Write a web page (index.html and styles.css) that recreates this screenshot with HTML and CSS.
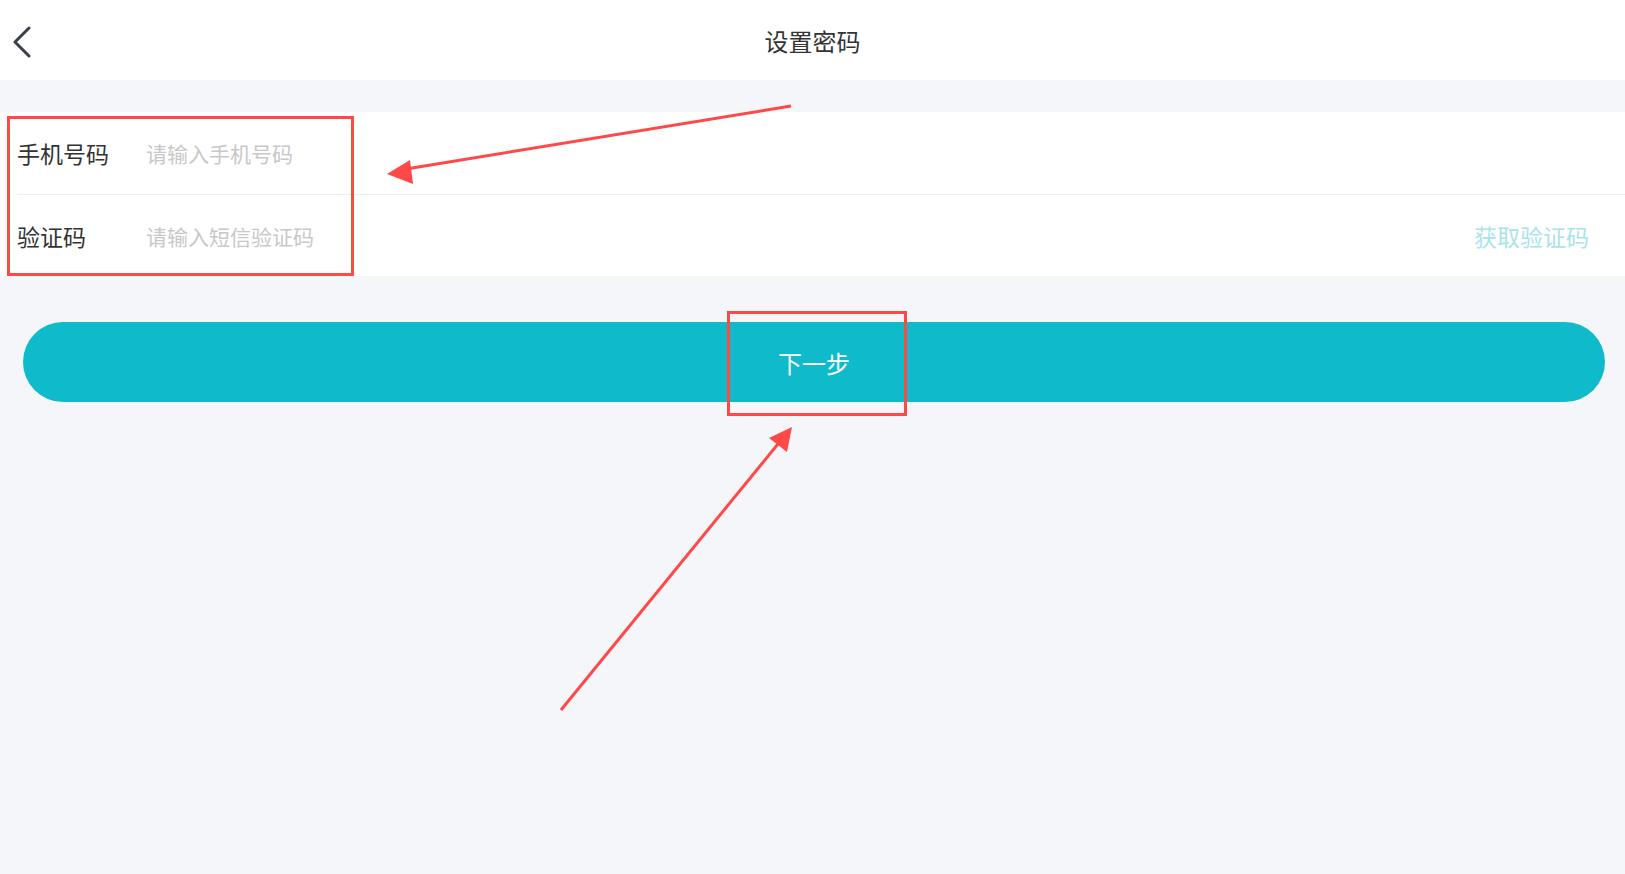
FILE: index.html
```html
<!DOCTYPE html>
<html>

<head>
    <meta charset="utf-8">
    <meta name="viewport" content="width=device-width">
    <title>设置密码</title>
    <link rel="stylesheet" href="styles.css">
</head>

<body>
    <div class="page">
        <div class="nav-bar">
            <span class="nav-back">
                <svg width="20" height="32" viewBox="0 0 20 32">
                    <path d="M17 2 L3 16 L17 30" fill="none" stroke="#3a3f4a" stroke-width="3" stroke-linecap="round" stroke-linejoin="round"/>
                </svg>
            </span>
            <div class="nav-title">设置密码</div>
        </div>

        <div class="form">
            <div class="form-item">
                <label class="form-label">手机号码</label>
                <input class="form-input" type="text" placeholder="请输入手机号码">
            </div>
            <div class="form-item">
                <label class="form-label">验证码</label>
                <input class="form-input" type="text" placeholder="请输入短信验证码">
                <span class="code-btn">获取验证码</span>
            </div>
        </div>

        <div class="btn-wrap">
            <button class="next-btn">下一步</button>
        </div>

        <!-- 标注 -->
        <div class="mark mark-form"></div>
        <div class="mark mark-btn"></div>
        <svg class="arrows" width="1625" height="874" viewBox="0 0 1625 874">
            <line x1="791" y1="106" x2="400" y2="170" stroke="#ff4848" stroke-width="3"/>
            <polygon points="387,174 410,160 413,184" fill="#ff4848"/>
            <line x1="561" y1="710" x2="782" y2="439" stroke="#ff4848" stroke-width="3"/>
            <polygon points="792,427 769,438 787,452" fill="#ff4848"/>
        </svg>
    </div>
</body>

</html>
```

FILE: styles.css
```css
* {
    box-sizing: border-box;
}

html,
body {
    margin: 0;
    padding: 0;
    background: #f5f6fa;
    font-family: "Noto Sans CJK SC", "Noto Sans", sans-serif;
}

.page {
    position: relative;
    min-height: 874px;
}

.nav-bar {
    height: 80px;
    background: #fff;
    display: flex;
    align-items: center;
    justify-content: center;
    position: relative;
}

.nav-back {
    position: absolute;
    left: 12px;
    top: 26px;
    display: flex;
}

.nav-title {
    font-size: 24px;
    color: #333;
}

.form {
    margin-top: 32px;
    background: #fff;
    padding-left: 17px;
}

.form-item {
    height: 82px;
    display: flex;
    align-items: center;
    padding-right: 36px;
}

.form-item + .form-item {
    border-top: 1px solid #eeeeee;
}

.form-label {
    width: 129px;
    font-size: 23px;
    color: #333;
}

.form-input {
    flex: 1;
    border: none;
    outline: none;
    font-size: 21px;
    font-family: inherit;
    color: #333;
    background: transparent;
    padding: 0;
}

.form-input::placeholder {
    color: #c8c8c8;
}

.code-btn {
    font-size: 23px;
    color: #a9e3eb;
}

.btn-wrap {
    padding: 46px 20px 0 23px;
}

.next-btn {
    display: block;
    width: 100%;
    height: 80px;
    border: none;
    border-radius: 40px;
    background: #0fbaca;
    color: #fff;
    font-size: 24px;
    font-family: inherit;
}

.mark {
    position: absolute;
    border: 3px solid #ff4848;
}

.mark-form {
    left: 7px;
    top: 116px;
    width: 347px;
    height: 160px;
}

.mark-btn {
    left: 727px;
    top: 311px;
    width: 180px;
    height: 105px;
}

.arrows {
    position: absolute;
    left: 0;
    top: 0;
    pointer-events: none;
}
```
